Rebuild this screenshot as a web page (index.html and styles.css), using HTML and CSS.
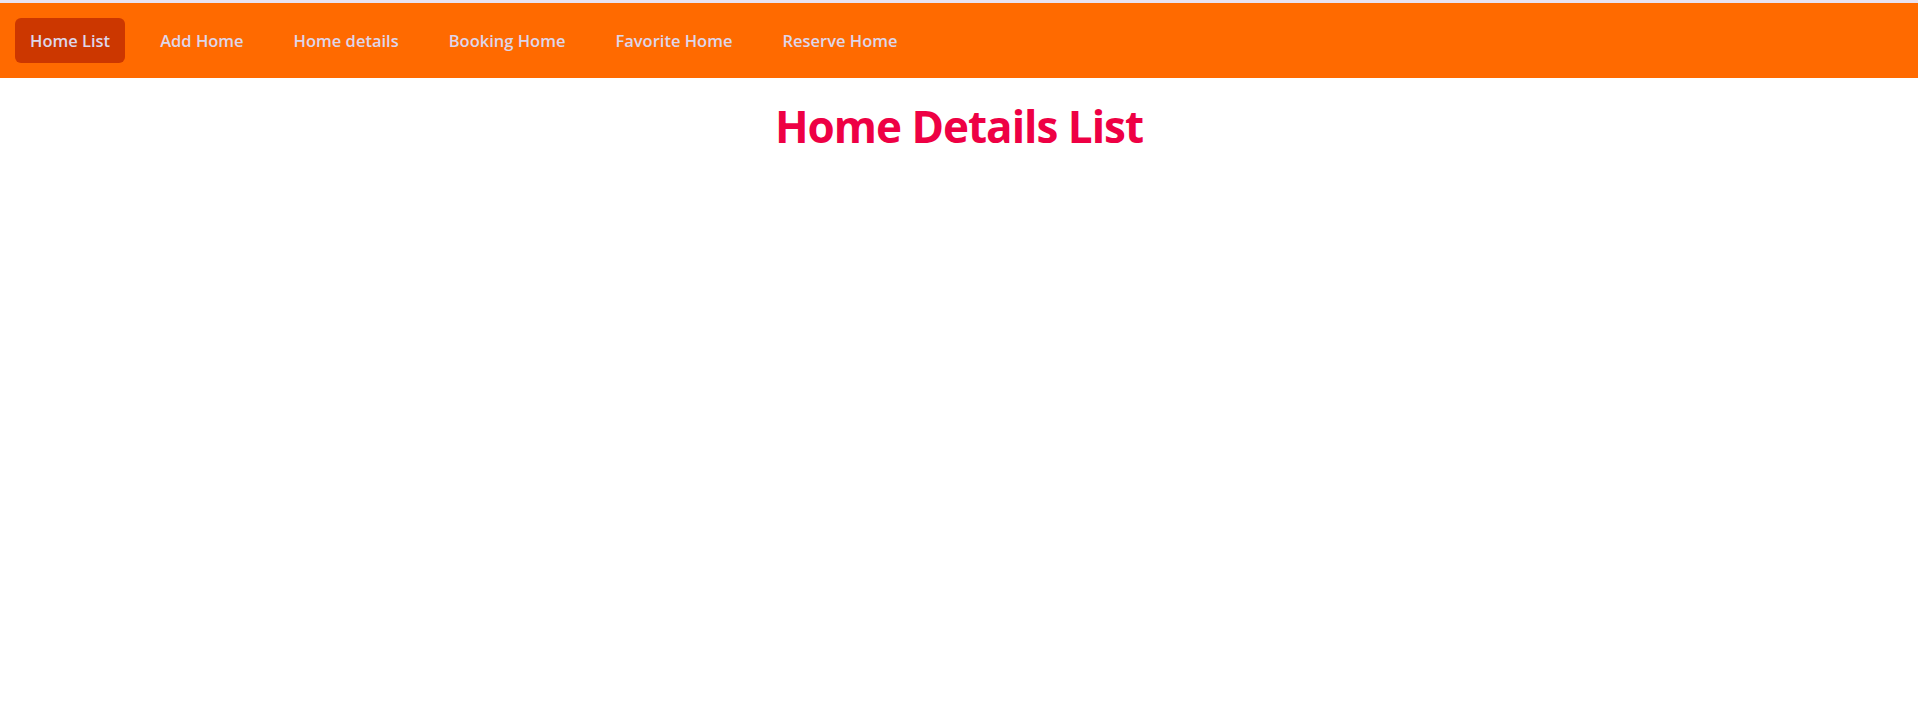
FILE: index.html
```html
<!DOCTYPE html>
<html lang="en">
<head>
<meta charset="utf-8">
<title>Home Details List</title>
<link rel="stylesheet" href="styles.css">
</head>
<body>
<div class="topline"></div>
<nav class="navbar">
  <ul class="nav-list">
    <li><a class="nav-link active" href="#">Home List</a></li>
    <li><a class="nav-link" href="#">Add Home</a></li>
    <li><a class="nav-link" href="#">Home details</a></li>
    <li><a class="nav-link" href="#">Booking Home</a></li>
    <li><a class="nav-link" href="#">Favorite Home</a></li>
    <li><a class="nav-link" href="#">Reserve Home</a></li>
  </ul>
</nav>
<main class="content">
  <h1 class="page-title">Home Details List</h1>
</main>
</body>
</html>
```
FILE: styles.css
```css
* { box-sizing: border-box; }
html, body { margin: 0; padding: 0; }
body {
  background: #ffffff;
  font-family: "Open Sans", "Noto Sans", sans-serif;
}
.topline {
  height: 3px;
  background: #e8e2f2;
}
.navbar {
  background: #ff6a00;
  padding: 15px;
}
.nav-list {
  list-style: none;
  margin: 0;
  padding: 0;
  display: flex;
  gap: 20px;
  align-items: center;
}
.nav-link {
  display: block;
  height: 45px;
  line-height: 45px;
  padding: 0 15px;
  border-radius: 6px;
  color: #ddd6ea;
  font-size: 16.5px;
  font-weight: 600;
  text-decoration: none;
}
.nav-link.active {
  background: #cc3700;
}
.content {
  text-align: center;
}
.page-title {
  margin: 0;
  padding-top: 22px;
  color: #ee0044;
  font-size: 44px;
  font-weight: 700;
  letter-spacing: -1px;
  line-height: 1.2;
}
```
